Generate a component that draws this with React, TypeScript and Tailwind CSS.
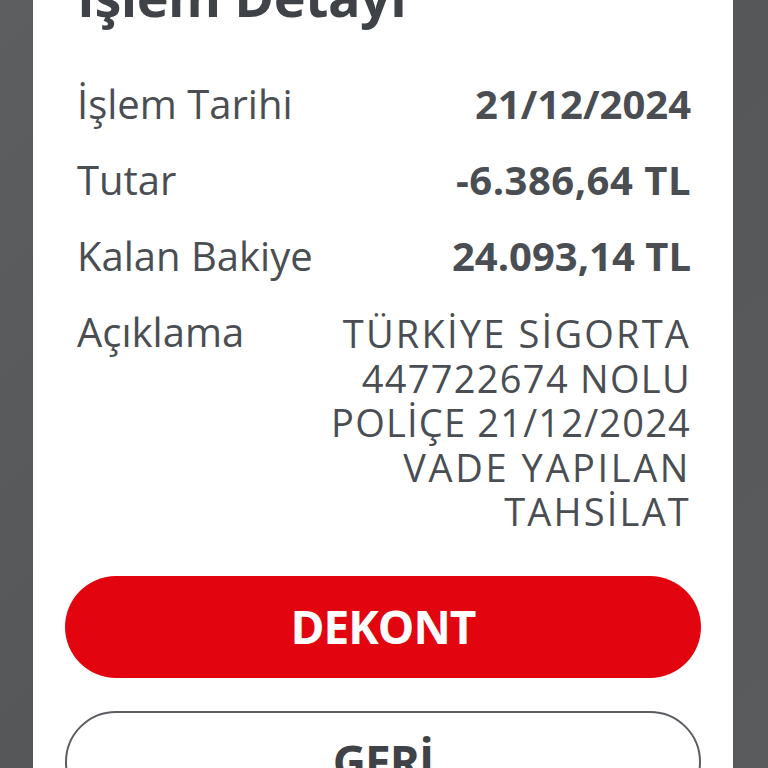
import React from "react";

const font = { fontFamily: '"Open Sans", "Noto Sans", sans-serif' };

const desc = [
  { t: "TÜRKİYE SİGORTA", c: "tracking-[2.2px]" },
  { t: "447722674 NOLU", c: "tracking-[1.3px]" },
  { t: "POLİÇE 21/12/2024", c: "tracking-[1.2px]" },
  { t: "VADE YAPILAN", c: "tracking-[2.6px]" },
  { t: "TAHSİLAT", c: "tracking-[2.2px]" },
];

export default function App() {
  return (
    <div
      className="w-[768px] h-[768px] overflow-hidden bg-gradient-to-br from-[#5d5e60] via-[#565759] to-[#5a5b5d] flex justify-center"
      style={font}
    >
      <div className="w-[700px] ml-[-2px] bg-white flex flex-col px-8 mt-[-31px] h-[900px]">
        <h1 className="px-3 text-[54px] leading-[54px] font-bold text-[#3f4348] tracking-[-0.5px]">
          İşlem Detayı
        </h1>
        <div className="pl-3 pr-[10px] mt-[57px] flex flex-col gap-[28px] text-[#4a4e53]">
          <div className="flex justify-between items-start text-[40px] leading-[48px]">
            <span>İşlem Tarihi</span>
            <span className="font-bold">21/12/2024</span>
          </div>
          <div className="flex justify-between items-start text-[40px] leading-[48px]">
            <span>Tutar</span>
            <span className="font-bold tracking-[0.5px]">-6.386,64 TL</span>
          </div>
          <div className="flex justify-between items-start text-[40px] leading-[48px]">
            <span>Kalan Bakiye</span>
            <span className="font-bold">24.093,14 TL</span>
          </div>
          <div className="flex justify-between items-start">
            <span className="text-[40px] leading-[48px]">Açıklama</span>
            <div className="flex flex-col items-end text-[38px] leading-[44.5px] mt-[3px]">
              {desc.map((l) => (
                <span key={l.t} className={`whitespace-nowrap ${l.c}`}>
                  {l.t}
                </span>
              ))}
            </div>
          </div>
        </div>
        <button className="mt-[42px] h-[102px] w-full rounded-full bg-[#e2050f] text-white text-[46px] font-bold tracking-[-1px] flex items-center justify-center">
          DEKONT
        </button>
        <button className="mt-[33px] h-[102px] w-full rounded-full border-2 border-[#5a5d61] bg-white text-[#3f4348] text-[46px] font-bold tracking-[-1px] flex items-center justify-center">
          GERİ
        </button>
      </div>
    </div>
  );
}
